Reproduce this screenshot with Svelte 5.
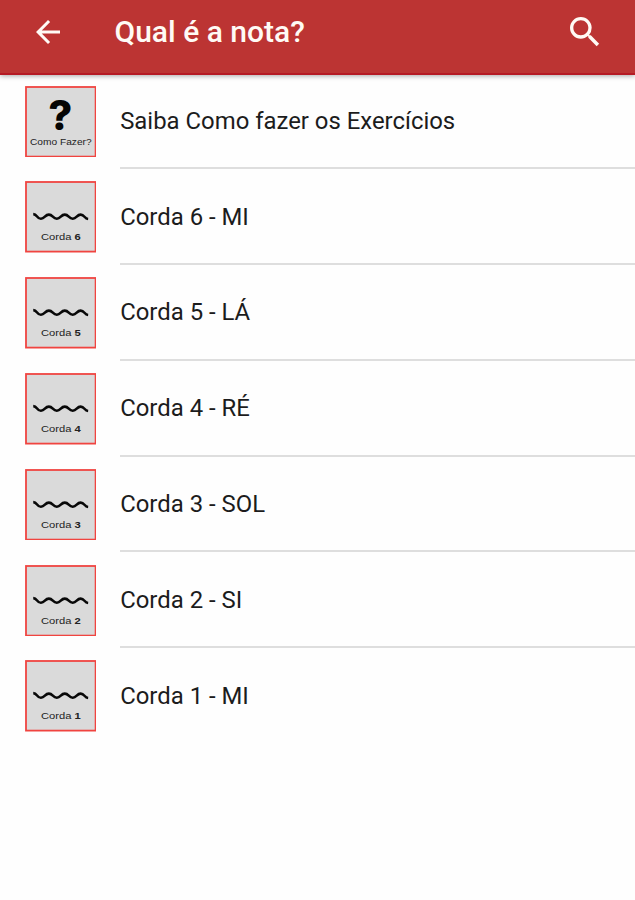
<script lang="ts">
    interface Lesson {
        title: string
        cord: string
    }

    const lessons: Lesson[] = [
        { title: 'Saiba Como fazer os Exercícios', cord: '' },
        { title: 'Corda 6 - MI', cord: '6' },
        { title: 'Corda 5 - LÁ', cord: '5' },
        { title: 'Corda 4 - RÉ', cord: '4' },
        { title: 'Corda 3 - SOL', cord: '3' },
        { title: 'Corda 2 - SI', cord: '2' },
        { title: 'Corda 1 - MI', cord: '1' }
    ]
</script>

<div class="screen">
    <header class="app-bar">
        <button class="icon-btn" aria-label="Voltar">
            <svg width="36" height="36" viewBox="0 0 24 24">
                <path d="M20 11H7.83l5.59-5.59L12 4l-8 8 8 8 1.41-1.41L7.83 13H20v-2z" />
            </svg>
        </button>
        <h1>Qual é a nota?</h1>
        <button class="icon-btn" aria-label="Buscar">
            <svg width="40" height="40" viewBox="0 0 24 24">
                <path d="M15.5 14h-.79l-.28-.27A6.471 6.471 0 0 0 16 9.5 6.5 6.5 0 1 0 9.5 16c1.61 0 3.09-.59 4.23-1.57l.27.28v.79l5 4.99L20.49 19l-4.99-5zm-6 0C7.01 14 5 11.99 5 9.5S7.01 5 9.5 5 14 7.01 14 9.5 11.99 14 9.5 14z" />
            </svg>
        </button>
    </header>

    <ul class="lesson-list">
        {#each lessons as lesson (lesson.title)}
            <li class="lesson">
                <svg class="thumb" viewBox="0 0 72 72">
                    <rect x="1" y="1" width="70" height="70" />
                    {#if lesson.cord}
                        <path d="M8.3 33.3 C12.3 33.3 12 38 16 38 S20 33.8 24 33.8 S28 38 32 38 S36 33.8 40 33.8 S44 38 48 38 S52 33.8 56 33.8 S59.5 37.8 63.5 38.2" />
                        <text x="36" y="59.5" textLength="40" lengthAdjust="spacingAndGlyphs">Corda <tspan class="bold">{lesson.cord}</tspan></text>
                    {:else}
                        <text class="question" x="35.5" y="44.5">?</text>
                        <text x="36" y="59.5" textLength="62" lengthAdjust="spacingAndGlyphs">Como Fazer?</text>
                    {/if}
                </svg>
                <span class="title">{lesson.title}</span>
            </li>
        {/each}
    </ul>
</div>

<style>
    :global(body) {
        background: #fefefe;
    }

    .screen {
        min-height: 900px;
        font-family: Roboto, sans-serif;
    }

    .app-bar {
        position: relative;
        box-sizing: border-box;
        height: 75px;
        padding: 0 30px 9px 30px;
        display: flex;
        align-items: center;
        background: #bc3433;
        border-bottom: 2px solid #b51a24;
        box-shadow: 0 1px 5px rgba(0, 0, 0, 0.35);
        color: #fffaf5;
    }

    .app-bar h1 {
        flex: 1;
        margin: 0 0 0 48.5px;
        font-size: 30px;
        line-height: 36px;
        font-weight: 500;
    }

    .icon-btn {
        display: flex;
        padding: 0;
        border: none;
        background: none;
        color: inherit;
        cursor: pointer;
    }

    .icon-btn svg {
        fill: currentColor;
    }

    .lesson-list {
        margin: -1.5px 0 0;
        padding: 0;
        list-style: none;
    }

    .lesson {
        display: flex;
        align-items: center;
        height: 95.8px;
        padding-left: 24.6px;
        gap: 24px;
    }

    .thumb {
        width: 71.6px;
        height: 71.6px;
        flex: none;
        font-family: 'Liberation Sans', Arial, sans-serif;
        font-size: 10px;
        text-anchor: middle;
        fill: #222;
    }

    .thumb rect {
        fill: #dadada;
        stroke: #f04440;
        stroke-width: 1.8;
    }

    .thumb path {
        fill: none;
        stroke: #080808;
        stroke-width: 2.6;
    }

    .bold {
        font-weight: 700;
    }

    .question {
        font-family: Inter, sans-serif;
        font-size: 42px;
        font-weight: 800;
        fill: #050505;
    }

    .title {
        flex: 1;
        height: 100%;
        box-sizing: border-box;
        display: flex;
        align-items: center;
        padding-top: 1px;
        border-bottom: 2px solid #dedede;
        font-size: 23.9px;
        color: #1c1c1c;
    }

    .lesson:last-child .title {
        border-color: transparent;
    }
</style>
